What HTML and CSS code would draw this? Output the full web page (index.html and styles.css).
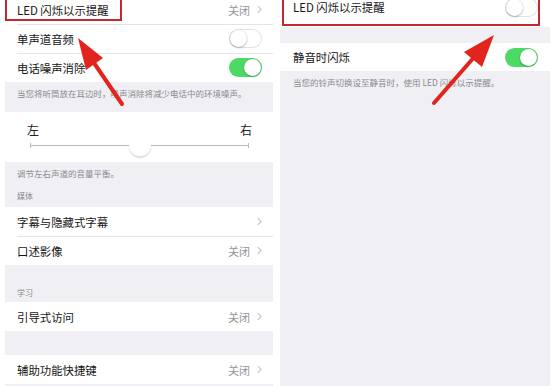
FILE: index.html
```html
<!DOCTYPE html>
<html lang="zh-CN">
<head>
  <meta charset="UTF-8">
  <title>辅助功能 - 听觉</title>
  <link rel="stylesheet" href="styles.css">
</head>
<body>
  <div class="screen">
    <section class="panel panel-left">
      <div class="cell">
        <span class="label">LED 闪烁以示提醒</span>
        <span class="detail">关闭<svg class="chev" viewBox="0 0 6 10"><path d="M1 1l4 4-4 4"/></svg></span>
      </div>
      <div class="cell">
        <span class="label">单声道音频</span>
        <span class="switch"></span>
      </div>
      <div class="cell">
        <span class="label">电话噪声消除</span>
        <span class="switch on"></span>
      </div>
      <div class="note note-first">当您将听筒放在耳边时，噪声消除将减少电话中的环境噪声。</div>
      <div class="balance">
        <div class="ends"><span>左</span><span>右</span></div>
        <div class="track"><span class="thumb"></span></div>
      </div>
      <div class="note note-balance">调节左右声道的音量平衡。</div>
      <div class="group-title">媒体</div>
      <div class="cell">
        <span class="label">字幕与隐藏式字幕</span>
        <span class="detail"><svg class="chev" viewBox="0 0 6 10"><path d="M1 1l4 4-4 4"/></svg></span>
      </div>
      <div class="cell">
        <span class="label">口述影像</span>
        <span class="detail">关闭<svg class="chev" viewBox="0 0 6 10"><path d="M1 1l4 4-4 4"/></svg></span>
      </div>
      <div class="group-title group-gap">学习</div>
      <div class="cell">
        <span class="label">引导式访问</span>
        <span class="detail">关闭<svg class="chev" viewBox="0 0 6 10"><path d="M1 1l4 4-4 4"/></svg></span>
      </div>
      <div class="spacer"></div>
      <div class="cell">
        <span class="label">辅助功能快捷键</span>
        <span class="detail">关闭<svg class="chev" viewBox="0 0 6 10"><path d="M1 1l4 4-4 4"/></svg></span>
      </div>
    </section>

    <section class="panel panel-right">
      <div class="cell cell-cut">
        <span class="label">LED 闪烁以示提醒</span>
        <span class="switch"></span>
      </div>
      <div class="spacer spacer-small"></div>
      <div class="cell">
        <span class="label">静音时闪烁</span>
        <span class="switch on"></span>
      </div>
      <div class="note">当您的铃声切换设至静音时，使用 LED 闪烁以示提醒。</div>
    </section>

    <!-- annotations drawn over the screenshots -->
    <div class="mark mark-left"></div>
    <div class="mark mark-right"></div>
    <svg class="arrows" viewBox="0 0 556 386">
      <line x1="122" y1="104" x2="92" y2="60"/>
      <polygon points="78,38 103,58 86,70"/>
      <line x1="434" y1="103" x2="476" y2="55"/>
      <polygon points="494,35 482,67 464,52"/>
    </svg>
  </div>
</body>
</html>
```

FILE: styles.css
```css
body {
  margin: 0;
  background: #fff;
  font-family: "Noto Sans CJK SC", "Noto Sans", sans-serif;
}
.screen {
  position: relative;
  width: 556px;
  height: 386px;
  overflow: hidden;
  display: flex;
  gap: 7px;
  padding-left: 5px;
  box-sizing: border-box;
}
.panel {
  background: #efeff4;
  display: flex;
  flex-direction: column;
}
.panel-left {
  width: 268px;
  margin-top: -5px;
}
.panel-right {
  width: 270px;
}
.cell {
  position: relative;
  background: #fff;
  height: 29px;
  flex-shrink: 0;
  display: flex;
  align-items: center;
  justify-content: space-between;
  padding: 0 11px 0 12px;
  box-sizing: border-box;
  font-size: 11.4px;
  color: #151515;
}
.cell + .cell::before {
  content: "";
  position: absolute;
  top: 0;
  left: 12px;
  right: 0;
  height: 1px;
  background: #e4e4e8;
}
.panel-right .cell {
  padding: 0 12px 0 13px;
  height: 28px;
}
.panel-right .cell-cut {
  height: 27px;
  padding-bottom: 13px;
}
.detail {
  display: flex;
  align-items: center;
  font-size: 11px;
  color: #929297;
}
.chev {
  width: 5px;
  height: 9px;
  margin-left: 7px;
  fill: none;
  stroke: #c4c4c9;
  stroke-width: 1.3;
}
.switch {
  position: relative;
  width: 33px;
  height: 19px;
  border-radius: 10px;
  background: #fff;
  box-shadow: inset 0 0 0 1px #e2e2e6;
}
.switch::after {
  content: "";
  position: absolute;
  top: 1px;
  left: 1px;
  width: 17px;
  height: 17px;
  border-radius: 50%;
  background: #fff;
  box-shadow: 0 1px 2px rgba(0,0,0,0.25), 0 0 1px rgba(0,0,0,0.2);
}
.switch.on {
  background: #4cd964;
  box-shadow: none;
}
.switch.on::after {
  left: 15px;
}
.note {
  padding: 5px 12px 0;
  font-size: 8.5px;
  line-height: 13px;
  color: #8a8a8f;
  flex-shrink: 0;
}
.panel-right .note {
  padding-left: 13px;
}
.note-first {
  height: 30px;
  box-sizing: border-box;
}
.note-balance {
  height: 23px;
  box-sizing: border-box;
}
.group-title {
  height: 22px;
  box-sizing: border-box;
  padding: 5px 12px 0;
  font-size: 8px;
  line-height: 12px;
  color: #8a8a8f;
  flex-shrink: 0;
}
.group-gap {
  height: 37px;
  padding-top: 22px;
}
.spacer {
  height: 24px;
  flex-shrink: 0;
}
.spacer-small {
  height: 16px;
}
.balance {
  background: #fff;
  height: 50px;
  padding-top: 11px;
  box-sizing: border-box;
  flex-shrink: 0;
}
.ends {
  display: flex;
  justify-content: space-between;
  padding: 0 21px 0 22px;
  font-size: 12px;
  line-height: 14px;
  color: #222;
}
.track {
  position: relative;
  margin: 8px 24px 0 25px;
  height: 1px;
  background: #b9b9bd;
}
.track::before,
.track::after {
  content: "";
  position: absolute;
  top: -2px;
  width: 1px;
  height: 5px;
  background: #b9b9bd;
}
.track::before {
  left: 0;
}
.track::after {
  right: 0;
}
.thumb {
  position: absolute;
  top: -11px;
  left: 99px;
  width: 22px;
  height: 22px;
  border-radius: 50%;
  background: #fff;
  box-shadow: 0 2px 2px rgba(0,0,0,0.14);
}
.mark {
  position: absolute;
  border: 2px solid #c4282e;
  box-sizing: border-box;
}
.mark-left {
  left: 5px;
  top: -3px;
  width: 117px;
  height: 24px;
}
.mark-right {
  left: 282px;
  top: -3px;
  width: 258px;
  height: 29px;
}
.arrows {
  position: absolute;
  left: 0;
  top: 0;
  width: 556px;
  height: 386px;
  pointer-events: none;
}
.arrows line {
  stroke: #e3231e;
  stroke-width: 4;
  stroke-linecap: round;
}
.arrows polygon {
  fill: #e3231e;
}
```
